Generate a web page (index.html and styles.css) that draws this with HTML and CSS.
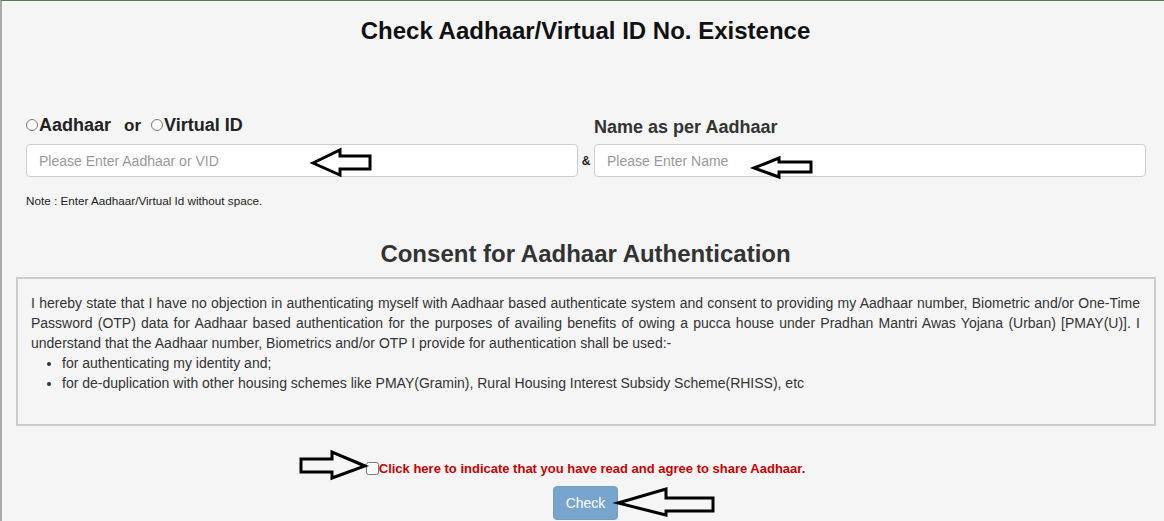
FILE: index.html
```html
<!DOCTYPE html>
<html lang="en">
<head>
<meta charset="utf-8">
<title>Check Aadhaar/Virtual ID No. Existence</title>
<link rel="stylesheet" href="styles.css">
</head>
<body>
    <div class="page">
        <h2 class="title">Check Aadhaar/Virtual ID No. Existence</h2>

        <form name="form1" class="fields">
            <div class="id_label">
                <label><input type="radio" name="id_type" class="radio">Aadhaar</label><span class="or">or</span><label><input type="radio" name="id_type" class="radio">Virtual ID</label>
            </div>
            <div></div>
            <label class="name_label" for="name">Name as per Aadhaar</label>

            <input class="text_input" id="aadhaar" type="text" placeholder="Please Enter Aadhaar or VID">
            <span class="amp">&amp;</span>
            <input class="text_input" id="name" type="text" placeholder="Please Enter Name">
        </form>

        <p class="note">Note : Enter Aadhaar/Virtual Id without space.</p>

        <h3 class="consent_title">Consent for Aadhaar Authentication</h3>

        <div class="consent_box">
            I hereby state that I have no objection in authenticating myself with Aadhaar based authenticate system and consent to providing my Aadhaar number, Biometric and/or One-Time Password (OTP) data for Aadhaar based authentication for the purposes of availing benefits of owing a pucca house under Pradhan Mantri Awas Yojana (Urban) [PMAY(U)]. I understand that the Aadhaar number, Biometrics and/or OTP I provide for authentication shall be used:-
            <ul class="consent_list">
                <li>for authenticating my identity and;</li>
                <li>for de-duplication with other housing schemes like PMAY(Gramin), Rural Housing Interest Subsidy Scheme(RHISS), etc</li>
            </ul>
        </div>

        <div class="agree_row">
            <input type="checkbox" id="agree" class="agree_box"><label for="agree" class="agree_text">Click here to indicate that you have read and agree to share Aadhaar.</label>
        </div>

        <div class="button_row">
            <button type="button" class="check_btn" disabled>Check</button>
        </div>
    </div>

    <svg class="arrows" width="1164" height="521" viewBox="0 0 1164 521">
        <polygon points="313,163 340,150 340,156 370,156 370,169 340,169 340,175" />
        <polygon points="754,168 779,158 779,162 811,162 811,172 779,172 779,177" />
        <polygon points="301,459 332,459 332,452 365,466 332,478 332,472 301,472" />
        <polygon points="618,503 666,489 666,498 713,498 713,511 666,511 666,515" />
    </svg>
</body>
</html>
```

FILE: styles.css
```css
body {
    margin: 0;
    position: relative;
    background-color: #f5f5f5;
    font-family: "Liberation Sans", Arial, sans-serif;
    font-size: 14px;
    color: #333;
}

.page {
    min-height: 520px;
    border-top: 1px solid #4e7f55;
    border-left: 2px solid #aaa;
    overflow: hidden;
}

.title {
    margin: 17px 0 0;
    padding-left: 5px;
    font-size: 24px;
    line-height: 26px;
    text-align: center;
    color: #111;
}

.fields {
    display: grid;
    grid-template-columns: 1fr 16px 1fr;
    row-gap: 7px;
    margin: 71px 18px 0 24px;
}

.id_label {
    font-size: 18px;
    font-weight: bold;
    line-height: 20px;
    color: #222;
    align-self: start;
}

.radio {
    width: 12px;
    height: 12px;
    margin: 0 1px 0 0;
    vertical-align: 0;
}

.or {
    margin: 0 10px 0 13px;
    font-size: 17px;
}

.name_label {
    margin: 2px 0 0;
    font-size: 18px;
    font-weight: bold;
    line-height: 20px;
}

.text_input {
    height: 33px;
    box-sizing: border-box;
    padding: 6px 12px;
    border: 1px solid #ccc;
    border-radius: 4px;
    background-color: #fff;
    font-family: "Liberation Sans", Arial, sans-serif;
    font-size: 14px;
    color: #555;
}

.text_input::placeholder {
    color: #999;
}

.amp {
    align-self: center;
    text-align: center;
    font-size: 12px;
    font-weight: bold;
    color: #222;
}

.note {
    margin: 17px 0 0 24px;
    font-size: 11.7px;
    line-height: 14px;
    color: #222;
}

.consent_title {
    margin: 33px 0 0;
    padding-left: 5px;
    font-size: 24px;
    line-height: 26px;
    text-align: center;
}

.consent_box {
    margin: 10px 8px 0 14px;
    padding: 14px 14px 31px 13px;
    border: 2px solid #ccc;
    line-height: 20px;
    text-align: justify;
}

.consent_list {
    margin: 0;
    padding-left: 31px;
    text-align: left;
}

.agree_row {
    margin-top: 33px;
    padding-left: 5px;
    text-align: center;
    line-height: 18px;
}

.agree_box {
    width: 13px;
    height: 13px;
    margin: 0;
    vertical-align: -2px;
}

.agree_text {
    font-size: 13px;
    font-weight: bold;
    color: #cc0000;
}

.button_row {
    margin-top: 8px;
    padding-left: 5px;
    text-align: center;
}

.check_btn {
    padding: 6px 12px;
    border: 1px solid #749dc1;
    border-radius: 4px;
    background-color: #77a5cd;
    color: #fff;
    font-family: "Liberation Sans", Arial, sans-serif;
    font-size: 14px;
    line-height: 20px;
}

.arrows {
    position: absolute;
    top: 0;
    left: 0;
    pointer-events: none;
}

.arrows polygon {
    fill: none;
    stroke: #000;
    stroke-width: 3;
}
```
